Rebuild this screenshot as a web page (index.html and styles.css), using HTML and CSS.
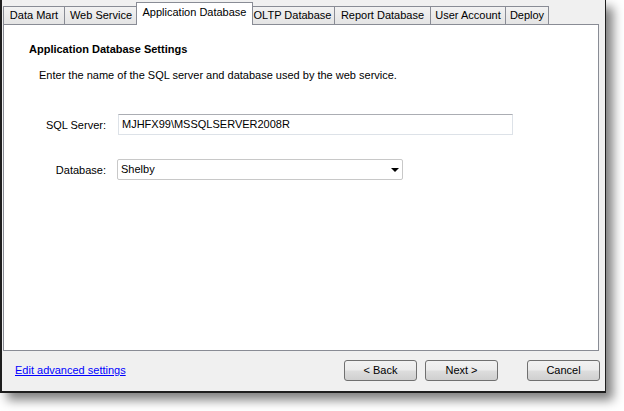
FILE: index.html
```
<!DOCTYPE html>
<html>
<head>
<meta charset="utf-8">
<link rel="stylesheet" href="styles.css">
</head>
<body>
<div class="window">
  <div class="tabs">
    <div class="tab w61">Data Mart</div>
    <div class="tab w72">Web Service</div>
    <div class="tab active w115">Application Database</div>
    <div class="tab w84">OLTP Database</div>
    <div class="tab w96">Report Database</div>
    <div class="tab w75">User Account</div>
    <div class="tab w43">Deploy</div>
  </div>
  <div class="panel">
    <div class="heading">Application Database Settings</div>
    <div class="desc">Enter the name of the SQL server and database used by the web service.</div>
    <div class="form">
      <div class="label">SQL Server:</div>
      <div class="input">MJHFX99\MSSQLSERVER2008R</div>
      <div class="label">Database:</div>
      <div class="select"><span>Shelby</span><span class="arrow"></span></div>
    </div>
  </div>
  <div class="footer">
    <a class="link" href="#">Edit advanced settings</a>
    <div class="buttons">
      <div class="btn">&lt; Back</div>
      <div class="btn">Next &gt;</div>
      <div class="btn cancel">Cancel</div>
    </div>
  </div>
</div>
</body>
</html>
```
FILE: styles.css
```
html, body {
  margin: 0;
  padding: 0;
  background: #ffffff;
}
body {
  font-family: "Liberation Sans", Arial, sans-serif;
  font-size: 11px;
  color: #000;
  min-height: 411px;
}
.window {
  width: 606px;
  height: 393px;
  box-sizing: border-box;
  background: #f0f0f0;
  border-left: 2px solid #1e1e1e;
  border-right: 1px solid #1e1e1e;
  border-bottom: 2px solid #1e1e1e;
  box-shadow: 7px 7px 10px rgba(0,0,0,0.5);
  display: flex;
  flex-direction: column;
}
.tabs {
  height: 24px;
  display: flex;
  align-items: flex-end;
  padding-left: 1px;
  position: relative;
  z-index: 2;
}
.tab {
  height: 18px;
  box-sizing: border-box;
  border: 1px solid #898c95;
  border-bottom: none;
  border-left: none;
  background: linear-gradient(#f2f2f2, #e4e4e4);
  text-align: center;
  line-height: 17px;
}
.tab:first-child { border-left: 1px solid #898c95; }
.tab.active {
  height: 23px;
  margin-bottom: -1px;
  margin-left: -2px;
  margin-right: -2px;
  border-left: 1px solid #898c95;
  background: #ffffff;
  line-height: 19px;
  position: relative;
  z-index: 3;
}
.w61 { width: 62px; }
.w72 { width: 73px; }
.w115 { width: 117px; }
.w84 { width: 84px; }
.w96 { width: 96px; }
.w75 { width: 75px; }
.w43 { width: 43px; }
.panel {
  height: 327px;
  box-sizing: border-box;
  margin: 0 6px 0 1px;
  background: #ffffff;
  border: 1px solid #898c95;
  padding: 18px 0 0 25px;
  position: relative;
  z-index: 1;
}
.heading {
  font-weight: bold;
  line-height: 13px;
}
.desc {
  margin-top: 13px;
  margin-left: 10px;
  line-height: 13px;
}
.form {
  margin-top: 32px;
  margin-left: -25px;
  display: grid;
  grid-template-columns: 102px auto;
  column-gap: 12px;
  row-gap: 24px;
  align-items: center;
}
.label {
  text-align: right;
}
.input {
  width: 395px;
  height: 21px;
  box-sizing: border-box;
  border: 1px solid #dde2e8;
  border-top-color: #abadb3;
  line-height: 19px;
  padding-left: 3px;
}
.select {
  width: 286px;
  height: 21px;
  box-sizing: border-box;
  margin-left: -1px;
  border: 1px solid #c8c8c8;
  border-radius: 2px;
  line-height: 19px;
  padding-left: 3px;
  display: flex;
  justify-content: space-between;
  align-items: center;
}
.arrow {
  width: 0;
  height: 0;
  border-left: 4px solid transparent;
  border-right: 4px solid transparent;
  border-top: 4px solid #000;
  margin-right: 3px;
}
.footer {
  flex: 1;
  display: flex;
  align-items: center;
  justify-content: space-between;
  padding: 1px 5px 3px 13px;
}
.link {
  color: #0000ff;
  text-decoration: underline;
}
.buttons {
  display: flex;
  gap: 8px;
}
.btn {
  width: 73px;
  height: 21px;
  box-sizing: border-box;
  border: 1px solid #707070;
  border-radius: 3px;
  background: linear-gradient(#f2f2f2 0%, #ebebeb 48%, #dddddd 52%, #cfcfcf 100%);
  text-align: center;
  line-height: 19px;
}
.btn.cancel {
  margin-left: 21px;
}
```
